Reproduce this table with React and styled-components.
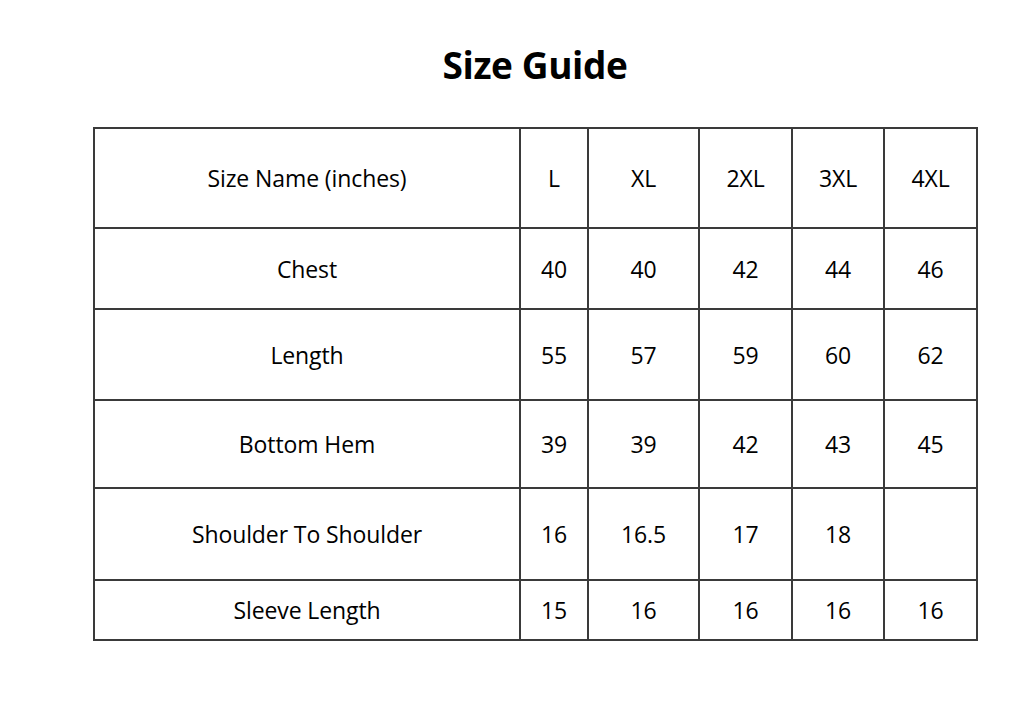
import React from 'react'
import styled, { createGlobalStyle } from 'styled-components'

const GlobalStyle = createGlobalStyle`
  body {
    margin: 0;
    background: #fff;
    font-family: "Open Sans", "Liberation Sans", sans-serif;
    color: #000;
  }
`

const Page = styled.div`
  width: 1024px;
  height: 711px;
  padding-top: 40px;
  box-sizing: border-box;
`

const Title = styled.h1`
  margin: 0;
  padding-left: 46px;
  text-align: center;
  font-size: 37px;
  line-height: 50px;
  font-weight: 700;
  letter-spacing: -0.4px;
`

const Table = styled.table`
  margin: 37px 0 0 93px;
  width: 883px;
  border-collapse: collapse;
  table-layout: fixed;
  font-size: 23px;
  letter-spacing: -0.1px;
`

const Row = styled.tr`
  height: ${p => p.$h}px;
`

const Cell = styled.td`
  border: 2px solid #3a3a3a;
  text-align: center;
  vertical-align: middle;
  padding: 0;
`

const cols = [426, 68, 111, 93, 92, 93]

const rows = [
  { h: 100, cells: ['Size Name (inches)', 'L', 'XL', '2XL', '3XL', '4XL'] },
  { h: 81, cells: ['Chest', '40', '40', '42', '44', '46'] },
  { h: 91, cells: ['Length', '55', '57', '59', '60', '62'] },
  { h: 88, cells: ['Bottom Hem', '39', '39', '42', '43', '45'] },
  { h: 92, cells: ['Shoulder To Shoulder', '16', '16.5', '17', '18', ''] },
  { h: 60, cells: ['Sleeve Length', '15', '16', '16', '16', '16'] },
]

const App = () => (
  <Page>
    <GlobalStyle />
    <Title>Size Guide</Title>
    <Table>
      <colgroup>
        {cols.map((w, i) => <col key={i} style={{ width: w }} />)}
      </colgroup>
      <tbody>
        {rows.map((r, i) => (
          <Row key={i} $h={r.h}>
            {r.cells.map((c, j) => <Cell key={j}>{c}</Cell>)}
          </Row>
        ))}
      </tbody>
    </Table>
  </Page>
)

export default App
